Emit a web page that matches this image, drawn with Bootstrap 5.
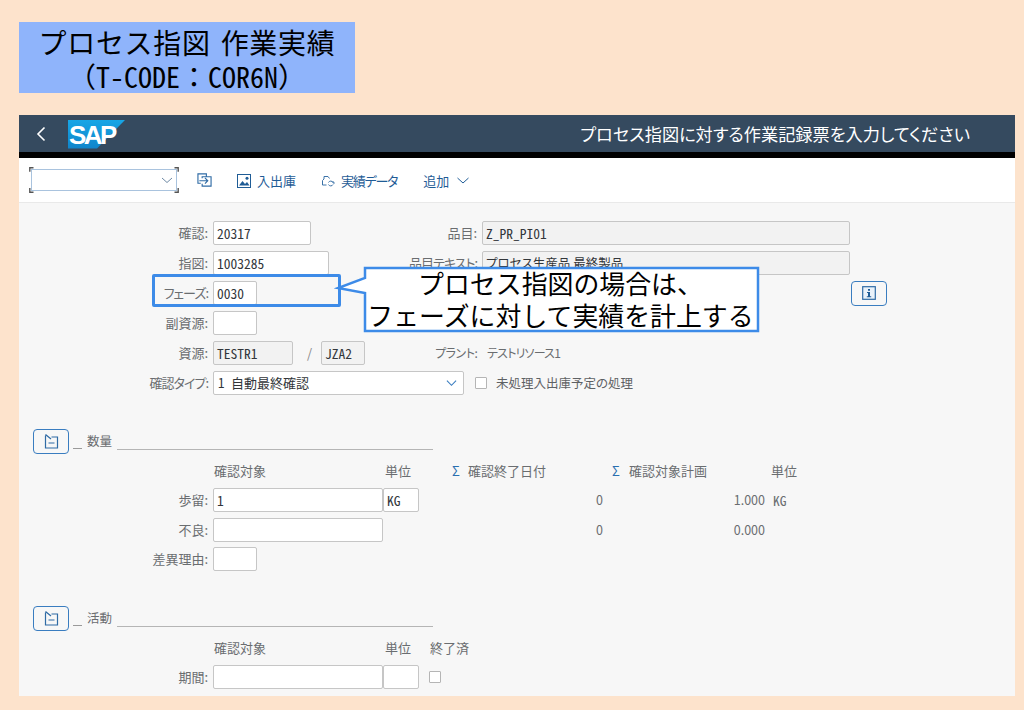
<!DOCTYPE html>
<html lang="ja">
<head>
<meta charset="utf-8">
<title>プロセス指図 作業実績</title>
<link href="https://cdn.jsdelivr.net/npm/bootstrap@5.3.0/dist/css/bootstrap.min.css" rel="stylesheet">
<style>
html,body{height:710px;overflow:hidden}
body{background:#fde3cc;font-family:"Noto Sans CJK JP","Liberation Sans",sans-serif;color:#32363a;position:relative;margin:0;padding:22px 9px 0 19px;font-feature-settings:"palt"}
.ttl{width:336px;height:71px;background:#8fb4fb;color:#000;text-align:center;font-feature-settings:normal}
.ttl-a{font-size:28px;padding-top:4px;height:39px;line-height:32px;letter-spacing:.7px;word-spacing:3px}
.ttl-b{font-size:28px;height:30px;line-height:30px;white-space:nowrap}
.hw{font-feature-settings:"hwid"}
.app{margin-top:22px;width:996px;height:581px;background:#f7f7f7;overflow:hidden}
.hdr{height:37px;background:#354a5f;color:#fff;padding:0 45px 0 17px}
.hdr-t{font-size:17.2px;line-height:1}
.sap{margin-left:22px;margin-top:2px}
.blk{height:6px;background:#000}
.tbar{height:45px;background:#fff;border-bottom:1px solid #e9e9e9;padding-left:10px;color:#1f5c96;font-size:13px}
.cmb{width:150px;height:26px;position:relative;margin-right:18px}
.cmb-i{position:absolute;left:2px;top:2px;width:146px;height:22px;border:1px solid #a9c3de;background:#fff}
.cmb-c{position:absolute;left:0;top:0}
.ti{margin-right:25px;padding-top:1px}
.ti svg{margin-right:6px}
.ti-x{margin-right:25px}
.ti-n{margin-right:26px;padding-top:1px}
.ti-n svg{margin-right:6px}
.ti-l{padding-top:1px}
.tn{letter-spacing:-1.200px}
.frm{padding-top:18px}
.rw{height:24px;margin-bottom:6px}
.lb{width:189px;text-align:right;font-size:13px;color:#6a6d70;margin-right:5px;flex:none}
.kt{letter-spacing:-1px}
.fi.form-control,.fs.form-select{border:1px solid #c6c6c6;border-radius:2px;height:24px;min-height:0;padding:0 3px;font-size:13.5px;line-height:22px;color:#32363a;background-color:#fff;font-feature-settings:"hwid";flex:none}
.fi.dis{background-color:#f2f2f2}
.fi.fj.form-control{font-size:12.5px;font-feature-settings:"palt"}
.fs.form-select{width:251px;padding-left:4px;font-size:13px;background-image:url("data:image/svg+xml,%3Csvg xmlns='http://www.w3.org/2000/svg' viewBox='0 0 12 8'%3E%3Cpath d='M1 1.500l5 5 5-5' fill='none' stroke='%233a7dc0' stroke-width='1.200'/%3E%3C/svg%3E");background-size:11px 8px;background-position:right 6px center}
.w-98{width:98px}.w-116{width:116px}.w-44{width:44px}.w-80{width:80px}.w-368{width:368px}.w-170{width:170px}.w-36{width:36px}
.lft{width:269px;flex:none}
.lb2{font-size:13px;color:#6a6d70;margin-right:5px}
.slash{color:#8a8a8a;font-size:13px;margin:0 9px 0 14px}
.plab{font-size:12px;color:#6a6d70;margin-left:70px;width:52px;letter-spacing:-.5px}
.pval{font-size:12px;color:#6a6d70;letter-spacing:-.8px}
.info.btn,.sec-b.btn{padding:0;border:1.5px solid #3a7dc0;border-radius:4px;background:transparent;line-height:1}
.info.btn{width:36px;height:25px;margin-left:594px}
.chk.form-check-input{width:12px;height:12px;margin:0;border:1px solid #b5b5b5;border-radius:1px;background-color:#fff;flex:none}
.chk.chk-a.form-check-input{margin-left:11px}
.chk.chk-e.form-check-input{margin-left:10px}
.chk-l{font-size:12.5px;color:#5e6164;margin-left:9px}
.sec{margin-top:34px}
.sec2{margin-top:35px}
.sec-h{padding-left:14px;height:25px}
.sec-b.btn{width:36px;height:25px;flex:none}
.us{margin-left:4px;width:14px}
.us-bar{display:block;width:9px;border-bottom:1px solid #9a9a9a;height:15px}
.sec-t{font-size:12.5px;color:#6a6d70;width:30px}
.sec-l{height:17px;width:316px;border-bottom:1px solid #b5b5b5}
.hr-r{height:18px;margin:8px 0;font-size:13px;color:#6a6d70;line-height:18px;font-feature-settings:normal}
.c-195{width:195px}.c-171{width:171px}.c-67{width:67px}.c-16{width:16px}.c-144{width:144px}.c-17{width:17px}.c-142{width:142px}.c-45{width:45px}
.sg{color:#2a6fb0}
.n-184{width:184px;text-align:right;font-size:12.5px;color:#6a6d70}
.n-162{width:162px;text-align:right;font-size:12.5px;color:#6a6d70}
.un{font-size:13.5px;color:#6a6d70;margin-left:8px;font-feature-settings:"hwid"}
.sp-36{width:36px;flex:none}
.r-dat{margin-bottom:6px;height:24px}
.r-tight{margin-bottom:5px}
.r-dat2{height:24px}
.hl{position:absolute;left:152px;top:274px;width:189px;height:33px;border:3px solid #3d8be8;border-radius:2px}
.cb{position:absolute;left:334px;top:264px;width:428px;height:70px;font-feature-settings:normal}
.cb svg{position:absolute;left:0;top:0}
.cb-t{position:absolute;left:29px;top:3px;width:395px;height:64px;font-size:25.9px;line-height:32px;color:#000;text-align:center;white-space:nowrap}
</style>
</head>
<body>
<div class="ttl">
  <div class="ttl-a">プロセス指図 作業実績</div>
  <div class="ttl-b">（<span class="hw">T-CODE</span>：<span class="hw">COR6N</span>）</div>
</div>
<div class="app">
  <div class="hdr d-flex align-items-center justify-content-between">
    <div class="d-flex align-items-center">
      <svg width="10" height="16" viewBox="0 0 10 16"><path d="M8.500 1.500L2 8l6.500 6.500" fill="none" stroke="#fff" stroke-width="1.600"/></svg>
      <svg class="sap" width="58" height="29" viewBox="0 0 58 29"><defs><linearGradient id="sg" x1="0" y1="0" x2="0" y2="1"><stop offset="0" stop-color="#17a6e6"/><stop offset="1" stop-color="#0f85cb"/></linearGradient></defs><polygon points="0,0 57,0 29,28.500 0,28.500" fill="url(#sg)"/><text x="1" y="23.500" font-family="Liberation Sans" font-weight="700" font-size="26" letter-spacing="-2.600" fill="#fff">SAP</text></svg>
    </div>
    <div class="hdr-t">プロセス指図に対する作業記録票を入力してください</div>
  </div>
  <div class="blk"></div>
  <div class="tbar d-flex align-items-center">
    <div class="cmb">
      <div class="cmb-i"></div>
      <svg class="cmb-c" width="150" height="26" viewBox="0 0 150 26"><path d="M4.500 .8H.8v4M145.500 .8h3.700v4M.8 21v4.200h3.700M149.200 21v4.200h-3.700" fill="none" stroke="#555" stroke-width="1.400"/><path d="M133 11l5 4.500 5-4.500" fill="none" stroke="#6f8aa5" stroke-width="1"/></svg>
    </div>
    <svg class="ti-x" width="15" height="16" viewBox="0 0 16 16"><path d="M4 11.500H1V1.500h9V4M5.500 12v2.500H15V4.500H5.500V6" fill="none" stroke="#2f6ba5" stroke-width="1.200"/><path d="M2.500 8.800h9M8.500 5.800l3 3-3 3" fill="none" stroke="#2f6ba5" stroke-width="1.200"/></svg>
    <div class="ti d-flex align-items-center"><svg width="14" height="14" viewBox="0 0 14 14"><rect x=".5" y=".5" width="13" height="13" fill="none" stroke="#1f5c96"/><path d="M2 11.500l3.500-4.500 2.500 3 2-2 2.500 3.500z" fill="#1f5c96"/><circle cx="10" cy="4.200" r="1.500" fill="#1f5c96"/></svg>入出庫</div>
    <div class="ti-n d-flex align-items-center"><svg width="14" height="12" viewBox="0 0 14 12"><path d="M5.500 10H1.500V5.500L3 4V1.500H7L8.500 3.500" fill="none" stroke="#3b72a8"/><path d="M7.500 7.500a2.500 2.500 0 0 1 4.500 0M12 9.500a2.500 2.500 0 0 1-4.500 0M12 6v2h1.800" fill="none" stroke="#3b72a8"/></svg><span class="tn">実績データ</span></div>
    <div class="ti-l d-flex align-items-center">追加<svg class="ms-2" width="12" height="7" viewBox="0 0 12 7"><path d="M.5 1L6 6l5.500-5" fill="none" stroke="#1f5c96"/></svg></div>
  </div>

  <div class="frm">
    <div class="rw d-flex align-items-center">
      <div class="lb">確認:</div>
      <div class="lft d-flex align-items-center justify-content-between"><div class="fi form-control w-98">20317</div><div class="lb2">品目:</div></div>
      <div class="fi dis form-control w-368">Z_PR_PI01</div>
    </div>
    <div class="rw d-flex align-items-center">
      <div class="lb">指図:</div>
      <div class="lft d-flex align-items-center justify-content-between"><div class="fi form-control w-116">1003285</div><div class="lb2 kt">品目テキスト:</div></div>
      <div class="fi fj dis form-control w-368">プロセス生産品 最終製品</div>
    </div>
    <div class="rw d-flex align-items-center">
      <div class="lb kt">フェーズ:</div>
      <div class="fi form-control w-44">0030</div>
      <button class="info btn d-flex align-items-center justify-content-center" type="button" aria-label="情報"><svg width="14" height="14" viewBox="0 0 14 14"><rect x=".7" y=".7" width="12.600" height="12.600" fill="#eaf2fa" stroke="#2f6ba5" stroke-width="1.200"/><path d="M6 3h2v1.800H6zM5 6h3v4.200h1.200v1H4.800v-1H6V7H5z" fill="#1f5c96"/></svg></button>
    </div>
    <div class="rw d-flex align-items-center">
      <div class="lb">副資源:</div>
      <div class="fi form-control w-44"></div>
    </div>
    <div class="rw d-flex align-items-center">
      <div class="lb">資源:</div>
      <div class="fi dis form-control w-80">TESTR1</div>
      <div class="slash">/</div>
      <div class="fi dis form-control w-44">JZA2</div>
      <div class="plab">プラント:</div>
      <div class="pval">テストリソース1</div>
    </div>
    <div class="rw d-flex align-items-center">
      <div class="lb kt">確認タイプ:</div>
      <div class="fs form-select">1 自動最終確認</div>
      <input class="chk chk-a form-check-input" type="checkbox" aria-label="未処理入出庫予定の処理">
      <div class="chk-l">未処理入出庫予定の処理</div>
    </div>
  </div>

  <div class="sec">
    <div class="sec-h d-flex align-items-center">
      <button class="sec-b btn d-flex align-items-center justify-content-center" type="button" aria-label="数量"><svg width="15" height="15" viewBox="0 0 15 15"><path d="M1.500 1.500V14H13.500V3H7.500M1.500 .5L7 5M4.500 9h6" fill="none" stroke="#2f6ba5" stroke-width="1.200"/></svg></button>
      <div class="us"><span class="us-bar"></span></div>
      <div class="sec-t">数量</div>
      <div class="sec-l"></div>
    </div>
    <div class="hr-r d-flex">
      <div class="c-195"></div><div class="c-171">確認対象</div><div class="c-67">単位</div><div class="c-16 sg">Σ</div><div class="c-144">確認終了日付</div><div class="c-17 sg">Σ</div><div class="c-142">確認対象計画</div><div>単位</div>
    </div>
    <div class="r-dat d-flex align-items-center">
      <div class="lb">歩留:</div><div class="fi form-control w-170">1</div><div class="fi form-control w-36">KG</div><div class="n-184">0</div><div class="n-162">1.000</div><div class="un">KG</div>
    </div>
    <div class="r-dat r-tight d-flex align-items-center">
      <div class="lb">不良:</div><div class="fi form-control w-170"></div><div class="sp-36"></div><div class="n-184">0</div><div class="n-162">0.000</div>
    </div>
    <div class="r-dat2 d-flex align-items-center">
      <div class="lb">差異理由:</div><div class="fi form-control w-44"></div>
    </div>
  </div>

  <div class="sec2">
    <div class="sec-h d-flex align-items-center">
      <button class="sec-b btn d-flex align-items-center justify-content-center" type="button" aria-label="活動"><svg width="15" height="15" viewBox="0 0 15 15"><path d="M1.500 1.500V14H13.500V3H7.500M1.500 .5L7 5M4.500 9h6" fill="none" stroke="#2f6ba5" stroke-width="1.200"/></svg></button>
      <div class="us"><span class="us-bar"></span></div>
      <div class="sec-t">活動</div>
      <div class="sec-l"></div>
    </div>
    <div class="hr-r d-flex">
      <div class="c-195"></div><div class="c-171">確認対象</div><div class="c-45">単位</div><div>終了済</div>
    </div>
    <div class="r-dat d-flex align-items-center">
      <div class="lb">期間:</div><div class="fi form-control w-170"></div><div class="fi form-control w-36"></div>
      <input class="chk chk-e form-check-input" type="checkbox" aria-label="終了済">
    </div>
  </div>
</div>

<div class="hl"></div>
<div class="cb">
  <svg width="428" height="70" viewBox="0 0 428 70"><path d="M31 4H424V67H31V29L4 24 31 14Z" fill="#fff" stroke="#3d8be8" stroke-width="2.500"/></svg>
  <div class="cb-t">プロセス指図の場合は、<br>フェーズに対して実績を計上する</div>
</div>
</body>
</html>
